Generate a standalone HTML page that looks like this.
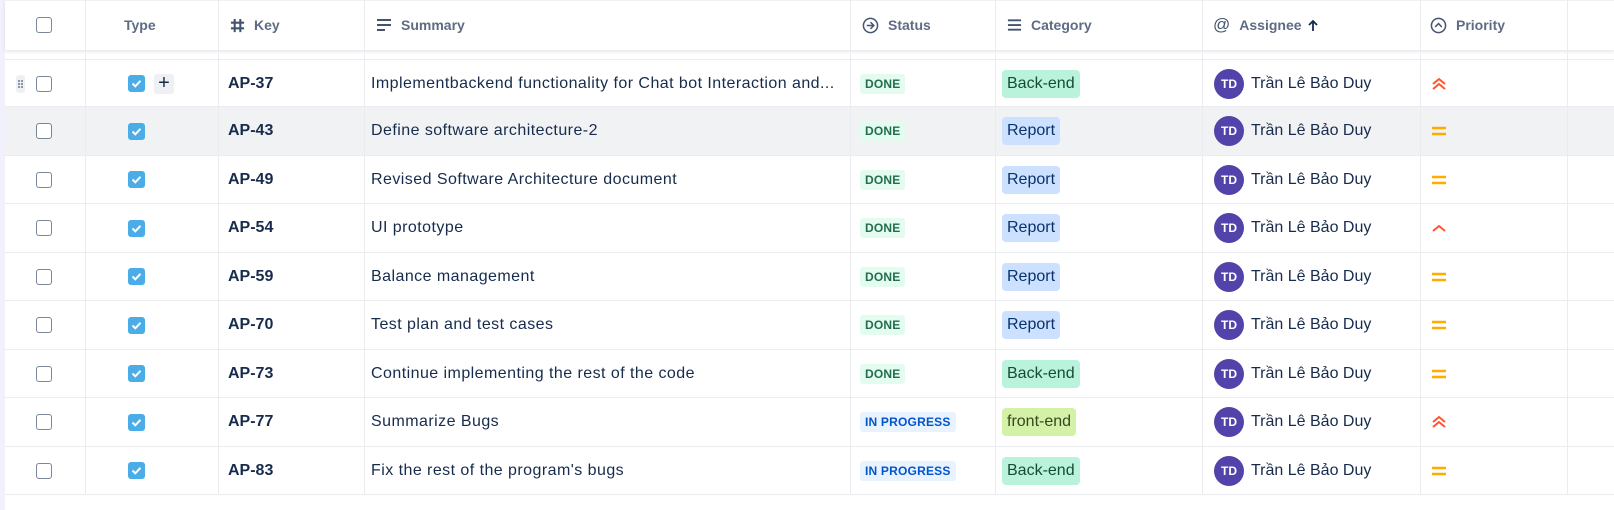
<!DOCTYPE html>
<html><head><meta charset="utf-8"><style>
*{box-sizing:border-box;margin:0;padding:0}
body{width:1614px;height:510px;background:#fff;font-family:"Liberation Sans","DejaVu Sans",sans-serif;position:relative;overflow:hidden;color:#172b4d}
.strip{position:absolute;left:0;top:0;width:5px;height:510px;background:#f1f0fb}
.hdr{position:absolute;left:5px;top:0;width:1609px;height:50px;background:#fff;box-shadow:0 2px 3px rgba(9,30,66,.10);z-index:3;border-top:1px solid #f0f1f3}
.vl{position:absolute;top:0;width:1px;height:494px;background:#ebecf0;z-index:4}
.h{position:absolute;top:0;height:50px;display:flex;align-items:center;font-size:14px;color:#5e6c84;font-weight:600;gap:9px}
.row{position:absolute;left:5px;width:1609px;height:48.5px;border-bottom:1px solid #ebecf0}
.row.g{background:#f1f2f4}
.c{position:absolute;top:0;height:48px;display:flex;align-items:center}
.cb{width:16px;height:16px;border:1.5px solid #7a869a;border-radius:3px;background:#fff}
.tk{width:17px;height:17px;background:#4bade8;border-radius:3px;display:flex;align-items:center;justify-content:center}
.key{font-weight:700;font-size:16px;color:#172b4d}
.sum{font-size:16px;color:#172b4d;white-space:nowrap;letter-spacing:0.45px}
.st{font-size:12px;font-weight:700;padding:3px 5px;border-radius:3px;letter-spacing:.2px}
.done{background:#e3fcef;color:#216e4e}
.ip{background:#e9f2ff;color:#0055cc}
.cat{font-size:16px;padding:5px 5px;border-radius:4px}
.be{background:#baf3db;color:#164b35}
.rp{background:#cce0ff;color:#09326c}
.fe{background:#d3f1a7;color:#37471f}
.av{width:30px;height:30px;border-radius:50%;background:#5243aa;color:#fff;font-size:12px;font-weight:700;display:flex;align-items:center;justify-content:center;margin-right:7px}
.nm{font-size:16px;color:#172b4d}
</style></head><body>
<div class="strip"></div>
<div class="hdr"></div>
<div class="vl" style="left:85px"></div>
<div class="vl" style="left:218px"></div>
<div class="vl" style="left:364px"></div>
<div class="vl" style="left:850px"></div>
<div class="vl" style="left:995px"></div>
<div class="vl" style="left:1202px"></div>
<div class="vl" style="left:1420px"></div>
<div class="vl" style="left:1567px"></div>
<div style="position:absolute;left:0;top:0;z-index:5;width:1614px;height:50px">
 <div class="h" style="left:36px"><div class="cb"></div></div>
 <div class="h" style="left:124px">Type</div>
 <div class="h" style="left:230px"><svg width="15" height="15" viewBox="0 0 16 16"><path d="M5 1v14M11 1v14M1 5h14M1 11h14" stroke="#44546f" stroke-width="2.2"/></svg>Key</div>
 <div class="h" style="left:376px"><svg width="16" height="14" viewBox="0 0 16 14"><path d="M1 2h14M1 7h14M1 12h8" stroke="#44546f" stroke-width="2"/></svg>Summary</div>
 <div class="h" style="left:862px"><svg width="17" height="17" viewBox="0 0 18 18"><circle cx="9" cy="9" r="7.5" fill="none" stroke="#44546f" stroke-width="1.6"/><path d="M5 9h7M9 5.5l3.5 3.5L9 12.5" fill="none" stroke="#44546f" stroke-width="1.6"/></svg>Status</div>
 <div class="h" style="left:1007px"><svg width="15" height="14" viewBox="0 0 16 14"><path d="M1 2h14M1 7h14M1 12h14" stroke="#44546f" stroke-width="2"/></svg>Category</div>
 <div class="h" style="left:1213px"><span style="font-size:17px;color:#44546f;font-weight:400">@</span>Assignee <svg width="12" height="13" viewBox="0 0 12 13" style="margin-left:-4px"><path d="M6 12V2M2 6l4-4 4 4" fill="none" stroke="#172b4d" stroke-width="1.8"/></svg></div>
 <div class="h" style="left:1430px"><svg width="17" height="17" viewBox="0 0 18 18"><circle cx="9" cy="9" r="7.5" fill="none" stroke="#44546f" stroke-width="1.6"/><path d="M5.5 10.5L9 7l3.5 3.5" fill="none" stroke="#44546f" stroke-width="1.6"/></svg>Priority</div>
</div>
<div id="rows"></div>
<script>
const hi='<svg width="16" height="14" viewBox="0 0 16 14"><path d="M2 7l6-5 6 5M2 12l6-5 6 5" fill="none" stroke="#ff5630" stroke-width="2"/></svg>';
const hi1='<svg width="16" height="10" viewBox="0 0 16 10"><path d="M2 8l6-5 6 5" fill="none" stroke="#ff5630" stroke-width="2"/></svg>';
const med='<svg width="16" height="10" viewBox="0 0 16 10"><path d="M1 2h14M1 8h14" stroke="#ffab00" stroke-width="2.4"/></svg>';
const D=[["AP-37","Implementbackend functionality for Chat bot Interaction and...","d","be",hi],
["AP-43","Define software architecture-2","d","rp",med],
["AP-49","Revised Software Architecture document","d","rp",med],
["AP-54","UI prototype","d","rp",hi1],
["AP-59","Balance management","d","rp",med],
["AP-70","Test plan and test cases","d","rp",med],
["AP-73","Continue implementing the rest of the code","d","be",med],
["AP-77","Summarize Bugs","i","fe",hi],
["AP-83","Fix the rest of the program's bugs","i","be",med]];
const cn={be:"Back-end",rp:"Report",fe:"front-end"};
let h='';
D.forEach((r,i)=>{
const t=58.5+i*48.5;
h+=`<div class="row${i==1?' g':''}" style="top:${t}px;border-top:${i==0?'1px solid #ebecf0':'0'}">
${i==0?'<div class="c" style="left:11px"><div style="width:9px;height:18px;background:#eef0f3;border-radius:3px;display:flex;align-items:center;justify-content:center"><svg width="5" height="8"><g fill="#44546f"><circle cx="1" cy="1" r=".9"/><circle cx="4" cy="1" r=".9"/><circle cx="1" cy="4" r=".9"/><circle cx="4" cy="4" r=".9"/><circle cx="1" cy="7" r=".9"/><circle cx="4" cy="7" r=".9"/></g></svg></div></div>':''}
<div class="c" style="left:31px"><div class="cb"></div></div>
<div class="c" style="left:123px"><div class="tk"><svg width="11" height="9" viewBox="0 0 11 9"><path d="M1.5 4.5l2.8 2.8L9.5 1.8" fill="none" stroke="#fff" stroke-width="2"/></svg></div>
${i==0?'<div style="width:20px;height:20px;background:#eef0f3;border-radius:3px;margin-left:9px;display:flex;align-items:center;justify-content:center;font-size:20px;color:#172b4d">+</div>':''}</div>
<div class="c key" style="left:223px">${r[0]}</div>
<div class="c sum" style="left:366px">${r[1]}</div>
<div class="c" style="left:855px"><span class="st ${r[2]=='d'?'done':'ip'}">${r[2]=='d'?'DONE':'IN PROGRESS'}</span></div>
<div class="c" style="left:997px"><span class="cat ${r[3]}">${cn[r[3]]}</span></div>
<div class="c" style="left:1209px"><div class="av">TD</div><span class="nm">Trần Lê Bảo Duy</span></div>
<div class="c" style="left:1426px">${r[4]}</div>
</div>`;});
document.getElementById('rows').innerHTML=h;
</script>
</body></html>
